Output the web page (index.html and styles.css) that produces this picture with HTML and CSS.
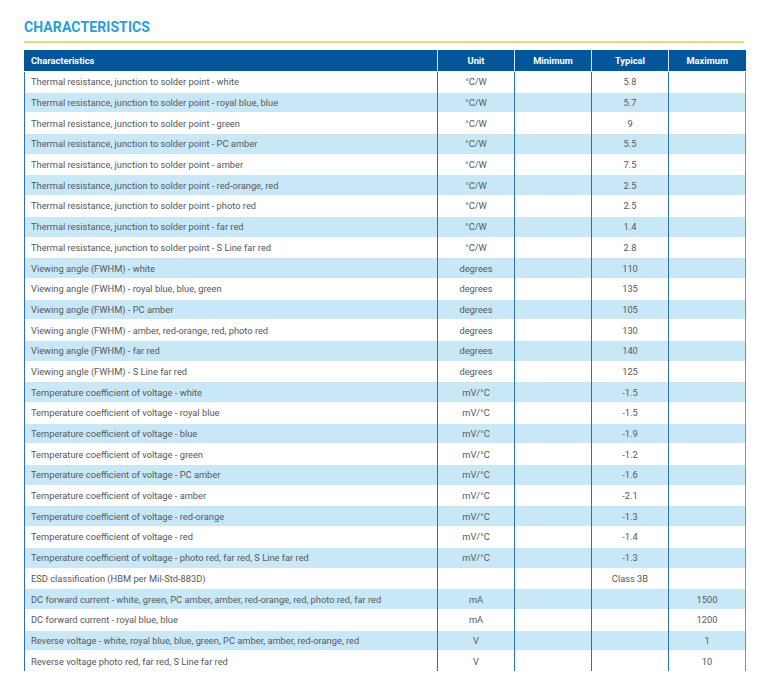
FILE: index.html
```html
<!DOCTYPE html>
<html>
<head>
<meta charset="utf-8">
<link rel="stylesheet" href="styles.css">
</head>
<body>
<div class="page">
  <h2 class="title">CHARACTERISTICS</h2>
  <div class="rule"></div>
  <table class="spec">
    <colgroup>
      <col class="c-name"><col class="c-unit"><col class="c-min"><col class="c-typ"><col class="c-max">
    </colgroup>
    <thead>
      <tr><th class="left">Characteristics</th><th>Unit</th><th>Minimum</th><th>Typical</th><th>Maximum</th></tr>
    </thead>
    <tbody>
      <tr><td class="left">Thermal resistance, junction to solder point - white</td><td>°C/W</td><td></td><td>5.8</td><td></td></tr>
      <tr><td class="left">Thermal resistance, junction to solder point - royal blue, blue</td><td>°C/W</td><td></td><td>5.7</td><td></td></tr>
      <tr><td class="left">Thermal resistance, junction to solder point - green</td><td>°C/W</td><td></td><td>9</td><td></td></tr>
      <tr><td class="left">Thermal resistance, junction to solder point - PC amber</td><td>°C/W</td><td></td><td>5.5</td><td></td></tr>
      <tr><td class="left">Thermal resistance, junction to solder point - amber</td><td>°C/W</td><td></td><td>7.5</td><td></td></tr>
      <tr><td class="left">Thermal resistance, junction to solder point - red-orange, red</td><td>°C/W</td><td></td><td>2.5</td><td></td></tr>
      <tr><td class="left">Thermal resistance, junction to solder point - photo red</td><td>°C/W</td><td></td><td>2.5</td><td></td></tr>
      <tr><td class="left">Thermal resistance, junction to solder point - far red</td><td>°C/W</td><td></td><td>1.4</td><td></td></tr>
      <tr><td class="left">Thermal resistance, junction to solder point - S Line far red</td><td>°C/W</td><td></td><td>2.8</td><td></td></tr>
      <tr><td class="left">Viewing angle (FWHM) - white</td><td>degrees</td><td></td><td>110</td><td></td></tr>
      <tr><td class="left">Viewing angle (FWHM) - royal blue, blue, green</td><td>degrees</td><td></td><td>135</td><td></td></tr>
      <tr><td class="left">Viewing angle (FWHM) - PC amber</td><td>degrees</td><td></td><td>105</td><td></td></tr>
      <tr><td class="left">Viewing angle (FWHM) - amber, red-orange, red, photo red</td><td>degrees</td><td></td><td>130</td><td></td></tr>
      <tr><td class="left">Viewing angle (FWHM) - far red</td><td>degrees</td><td></td><td>140</td><td></td></tr>
      <tr><td class="left">Viewing angle (FWHM) - S Line far red</td><td>degrees</td><td></td><td>125</td><td></td></tr>
      <tr><td class="left">Temperature coefficient of voltage - white</td><td>mV/°C</td><td></td><td>-1.5</td><td></td></tr>
      <tr><td class="left">Temperature coefficient of voltage - royal blue</td><td>mV/°C</td><td></td><td>-1.5</td><td></td></tr>
      <tr><td class="left">Temperature coefficient of voltage - blue</td><td>mV/°C</td><td></td><td>-1.9</td><td></td></tr>
      <tr><td class="left">Temperature coefficient of voltage - green</td><td>mV/°C</td><td></td><td>-1.2</td><td></td></tr>
      <tr><td class="left">Temperature coefficient of voltage - PC amber</td><td>mV/°C</td><td></td><td>-1.6</td><td></td></tr>
      <tr><td class="left">Temperature coefficient of voltage - amber</td><td>mV/°C</td><td></td><td>-2.1</td><td></td></tr>
      <tr><td class="left">Temperature coefficient of voltage - red-orange</td><td>mV/°C</td><td></td><td>-1.3</td><td></td></tr>
      <tr><td class="left">Temperature coefficient of voltage - red</td><td>mV/°C</td><td></td><td>-1.4</td><td></td></tr>
      <tr><td class="left">Temperature coefficient of voltage - photo red, far red, S Line far red</td><td>mV/°C</td><td></td><td>-1.3</td><td></td></tr>
      <tr><td class="left">ESD classification (HBM per Mil-Std-883D)</td><td></td><td></td><td>Class 3B</td><td></td></tr>
      <tr><td class="left">DC forward current - white, green, PC amber, amber, red-orange, red, photo red, far red</td><td>mA</td><td></td><td></td><td>1500</td></tr>
      <tr><td class="left">DC forward current - royal blue, blue</td><td>mA</td><td></td><td></td><td>1200</td></tr>
      <tr><td class="left">Reverse voltage - white, royal blue, blue, green, PC amber, amber, red-orange, red</td><td>V</td><td></td><td></td><td>1</td></tr>
      <tr><td class="left">Reverse voltage photo red, far red, S Line far red</td><td>V</td><td></td><td></td><td>10</td></tr>
    </tbody>
  </table>
</div>
</body>
</html>
```
FILE: styles.css
```css
html, body {
  margin: 0;
  padding: 0;
  background: #ffffff;
}
.page {
  padding: 19px 18px 0 24px;
  font-family: Roboto, "Liberation Sans", sans-serif;
}
.title {
  margin: 0;
  font-size: 14px;
  font-weight: 700;
  color: #2a9dd9;
  letter-spacing: 0.1px;
  line-height: 16px;
}
.rule {
  height: 2px;
  background: #f7d96a;
  margin-top: 6px;
  width: 720px;
}
.spec {
  margin-top: 7px;
  border-collapse: collapse;
  table-layout: fixed;
  width: 721px;
  font-size: 9.3px;
  color: #585858;
}
.c-name { width: 413px; }
.c-unit { width: 77px; }
.c-min { width: 77px; }
.c-typ { width: 77px; }
.c-max { width: 77px; }
.spec th {
  background: #03569a;
  color: #ffffff;
  font-weight: 700;
  font-size: 9.3px;
  height: 21px;
  padding: 0 6px;
  text-align: center;
  border-left: 1px solid #d5e6f3;
  border-bottom: 1px solid #ffffff;
}
.spec th:first-child {
  border-left: 1px solid #03569a;
}
.spec td {
  height: 19.7px;
  padding: 0 6px;
  text-align: center;
  border-left: 1px solid #2f6fac;
  border-top: 1px solid #ffffff;
  white-space: nowrap;
}
.spec td:last-child {
  border-right: 1px solid #5b9bcf;
}
.spec td:first-child {
  border-left: 1px solid #2f6fac;
}
.spec .left {
  text-align: left;
}
.spec tbody tr:nth-child(even) td {
  background: #c8e8f8;
}
```
